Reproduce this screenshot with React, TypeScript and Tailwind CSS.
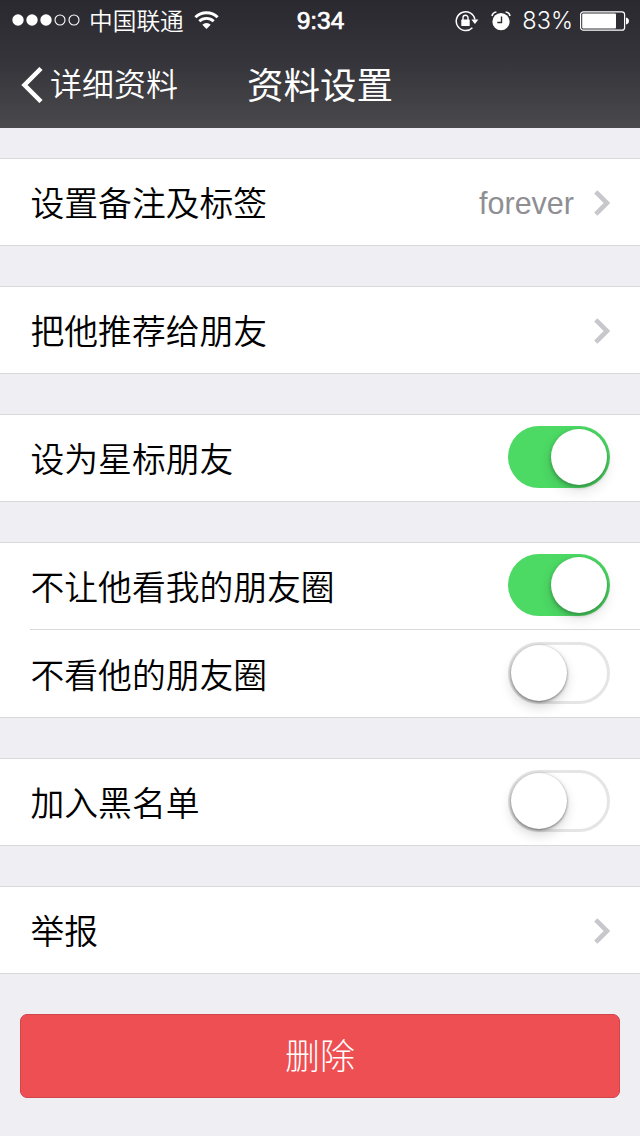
import { ReactNode, useState } from "react";

interface settingRowProps {
  title: string;
  children?: ReactNode;
}

interface toggleProps {
  label: string;
  defaultOn?: boolean;
}

function SignalDots() {
  return (
    <svg width="68" height="12" viewBox="0 0 68 12" className="shrink-0">
      {[0, 1, 2, 3, 4].map((i) => (
        <circle
          key={i}
          cx={6 + i * 14}
          cy="6"
          r={i < 3 ? 5.7 : 5}
          fill={i < 3 ? "#fff" : "none"}
          stroke={i < 3 ? "none" : "#fff"}
          strokeWidth="1.1"
        />
      ))}
    </svg>
  );
}

function WifiIcon() {
  return (
    <svg width="25" height="18" viewBox="0 0 25 18" className="shrink-0" fill="none" stroke="#fff">
      <path d="M1.4 6.2a15.8 15.8 0 0 1 22.2 0" strokeWidth="3" />
      <path d="M5.3 10.3a10.3 10.3 0 0 1 14.4 0" strokeWidth="2.8" />
      <path d="M12.5 18 8.3 13.8a6 6 0 0 1 8.4 0Z" fill="#fff" stroke="none" />
    </svg>
  );
}

function RotationLockIcon() {
  return (
    <svg width="24" height="22" viewBox="0 0 24 22" className="shrink-0" fill="none" stroke="#fff">
      <path d="M17.4 17.7A9.4 9.4 0 1 1 19.9 9.5" strokeWidth="1.5" />
      <path d="M16.4 9.5h7L19.9 14Z" fill="#fff" stroke="none" />
      <rect x="6.3" y="9.6" width="8.4" height="6.4" rx="0.6" fill="#fff" stroke="none" />
      <path d="M8 10V7.7a2.5 2.5 0 0 1 5 0V10" strokeWidth="1.4" />
    </svg>
  );
}

function AlarmIcon() {
  return (
    <svg width="20" height="20" viewBox="0 0 20 20" className="shrink-0" fill="none">
      <circle cx="10" cy="10.7" r="8.6" fill="#fff" />
      <path d="M10.5 5.5v6H6.3" stroke="#2d2c33" strokeWidth="1.4" />
      <path d="M1 5a5 5 0 0 1 4.4-4M19 5a5 5 0 0 0-4.4-4" stroke="#fff" strokeWidth="1.6" />
    </svg>
  );
}

function BatteryIcon() {
  return (
    <svg width="49" height="20" viewBox="0 0 49 20" className="shrink-0">
      <rect x="0.6" y="0.8" width="44" height="18.4" rx="2.8" fill="none" stroke="#fff" strokeWidth="1.2" />
      <rect x="2.2" y="2.5" width="33.8" height="15" rx="1" fill="#fff" />
      <path d="M46 6.5c1.8.3 3 1.7 3 3.5s-1.2 3.2-3 3.5Z" fill="#fff" />
    </svg>
  );
}

function Chevron() {
  return (
    <svg width="16" height="26" viewBox="0 0 16 26" className="mt-0.5 shrink-0" fill="none">
      <path d="M1.8 1.8 13 13 1.8 24.2" stroke="#c7c7cc" strokeWidth="4.6" />
    </svg>
  );
}

function Toggle({ label, defaultOn = false }: toggleProps) {
  const [isOn, setIsOn] = useState(defaultOn);

  return (
    <button
      type="button"
      role="switch"
      aria-checked={isOn}
      aria-label={label}
      onClick={() => setIsOn(!isOn)}
      className={`mb-0.5 flex h-[62px] w-[102px] shrink-0 items-center rounded-full ${
        isOn
          ? "justify-end bg-[#4cd964] pr-[3px]"
          : "justify-start border-[3px] border-[#e5e5e5] bg-white"
      }`}
    >
      <span
        className={`size-[56px] rounded-full bg-white ${
          isOn
            ? "shadow-[0_2px_4px_rgba(0,0,0,0.3),0_6px_14px_rgba(0,0,0,0.12)]"
            : "shadow-[0_1px_3px_rgba(0,0,0,0.5),0_6px_12px_rgba(0,0,0,0.16)]"
        }`}
      />
    </button>
  );
}

function SettingGroup({ children }: { children: ReactNode }) {
  return <section className="border-y border-[#d9d8dd] bg-white">{children}</section>;
}

function SettingRow({ title, children }: settingRowProps) {
  return (
    <div className="flex h-[86px] items-center justify-between pr-[30px] pl-[30.5px]">
      <span className="pt-[5px] text-[33.8px] leading-none font-[350] text-black">{title}</span>
      <div className="flex items-center">{children}</div>
    </div>
  );
}

export default function App() {
  return (
    <div className="min-h-[1136px] w-[640px] overflow-hidden bg-[#efeef2] font-['Liberation_Sans','Noto_Sans_CJK_SC',sans-serif]">
      <header className="h-32 bg-linear-to-b from-[#2a292f] via-[#36353b] to-[#4a494c] text-white">
        <div className="grid h-[41px] grid-cols-[1fr_auto_1fr] items-center pr-[11px] pl-3">
          <div className="flex items-center">
            <SignalDots />
            <span className="ml-[9px] pt-1 text-[23.7px] leading-none font-[350]">中国联通</span>
            <span className="ml-2.5">
              <WifiIcon />
            </span>
          </div>
          <span className="pt-px text-[24.5px] leading-none [-webkit-text-stroke:0.7px_white]">9:34</span>
          <div className="flex items-center justify-end">
            <RotationLockIcon />
            <span className="ml-3">
              <AlarmIcon />
            </span>
            <span className="mr-[7px] ml-[11px] pt-px font-['Inter','Liberation_Sans',sans-serif] text-[23.5px] leading-none font-light">
              83%
            </span>
            <BatteryIcon />
          </div>
        </div>
        <div className="grid h-[87px] grid-cols-[1fr_auto_1fr] items-center px-[21px]">
          <button type="button" className="flex items-center">
            <svg width="22" height="36" viewBox="0 0 22 36" fill="none">
              <path d="M20 1.5 3.5 18 20 34.5" stroke="#fff" strokeWidth="4.5" />
            </svg>
            <span className="ml-[7px] text-[32px] leading-none font-[350]">详细资料</span>
          </button>
          <h1 className="pt-[5px] text-[36.5px] leading-none font-normal">资料设置</h1>
        </div>
      </header>

      <main className="flex flex-col gap-10 pt-[30px]">
        <SettingGroup>
          <SettingRow title="设置备注及标签">
            <span className="mr-5 pt-0.5 text-[30.5px] leading-none text-[#8e8e93]">forever</span>
            <Chevron />
          </SettingRow>
        </SettingGroup>
        <SettingGroup>
          <SettingRow title="把他推荐给朋友">
            <Chevron />
          </SettingRow>
        </SettingGroup>
        <SettingGroup>
          <SettingRow title="设为星标朋友">
            <Toggle label="设为星标朋友" defaultOn />
          </SettingRow>
        </SettingGroup>
        <SettingGroup>
          <SettingRow title="不让他看我的朋友圈">
            <Toggle label="不让他看我的朋友圈" defaultOn />
          </SettingRow>
          <div className="ml-[30px] h-px bg-[#d9d8dd]" />
          <div className="pt-px">
            <SettingRow title="不看他的朋友圈">
              <Toggle label="不看他的朋友圈" />
            </SettingRow>
          </div>
        </SettingGroup>
        <SettingGroup>
          <SettingRow title="加入黑名单">
            <Toggle label="加入黑名单" />
          </SettingRow>
        </SettingGroup>
        <SettingGroup>
          <SettingRow title="举报">
            <Chevron />
          </SettingRow>
        </SettingGroup>
        <button
          type="button"
          className="mx-5 h-[84px] rounded-[7px] border border-[#cf474c] bg-[#ee4f53] text-[35px] leading-none font-light text-white"
        >
          删除
        </button>
      </main>
    </div>
  );
}
